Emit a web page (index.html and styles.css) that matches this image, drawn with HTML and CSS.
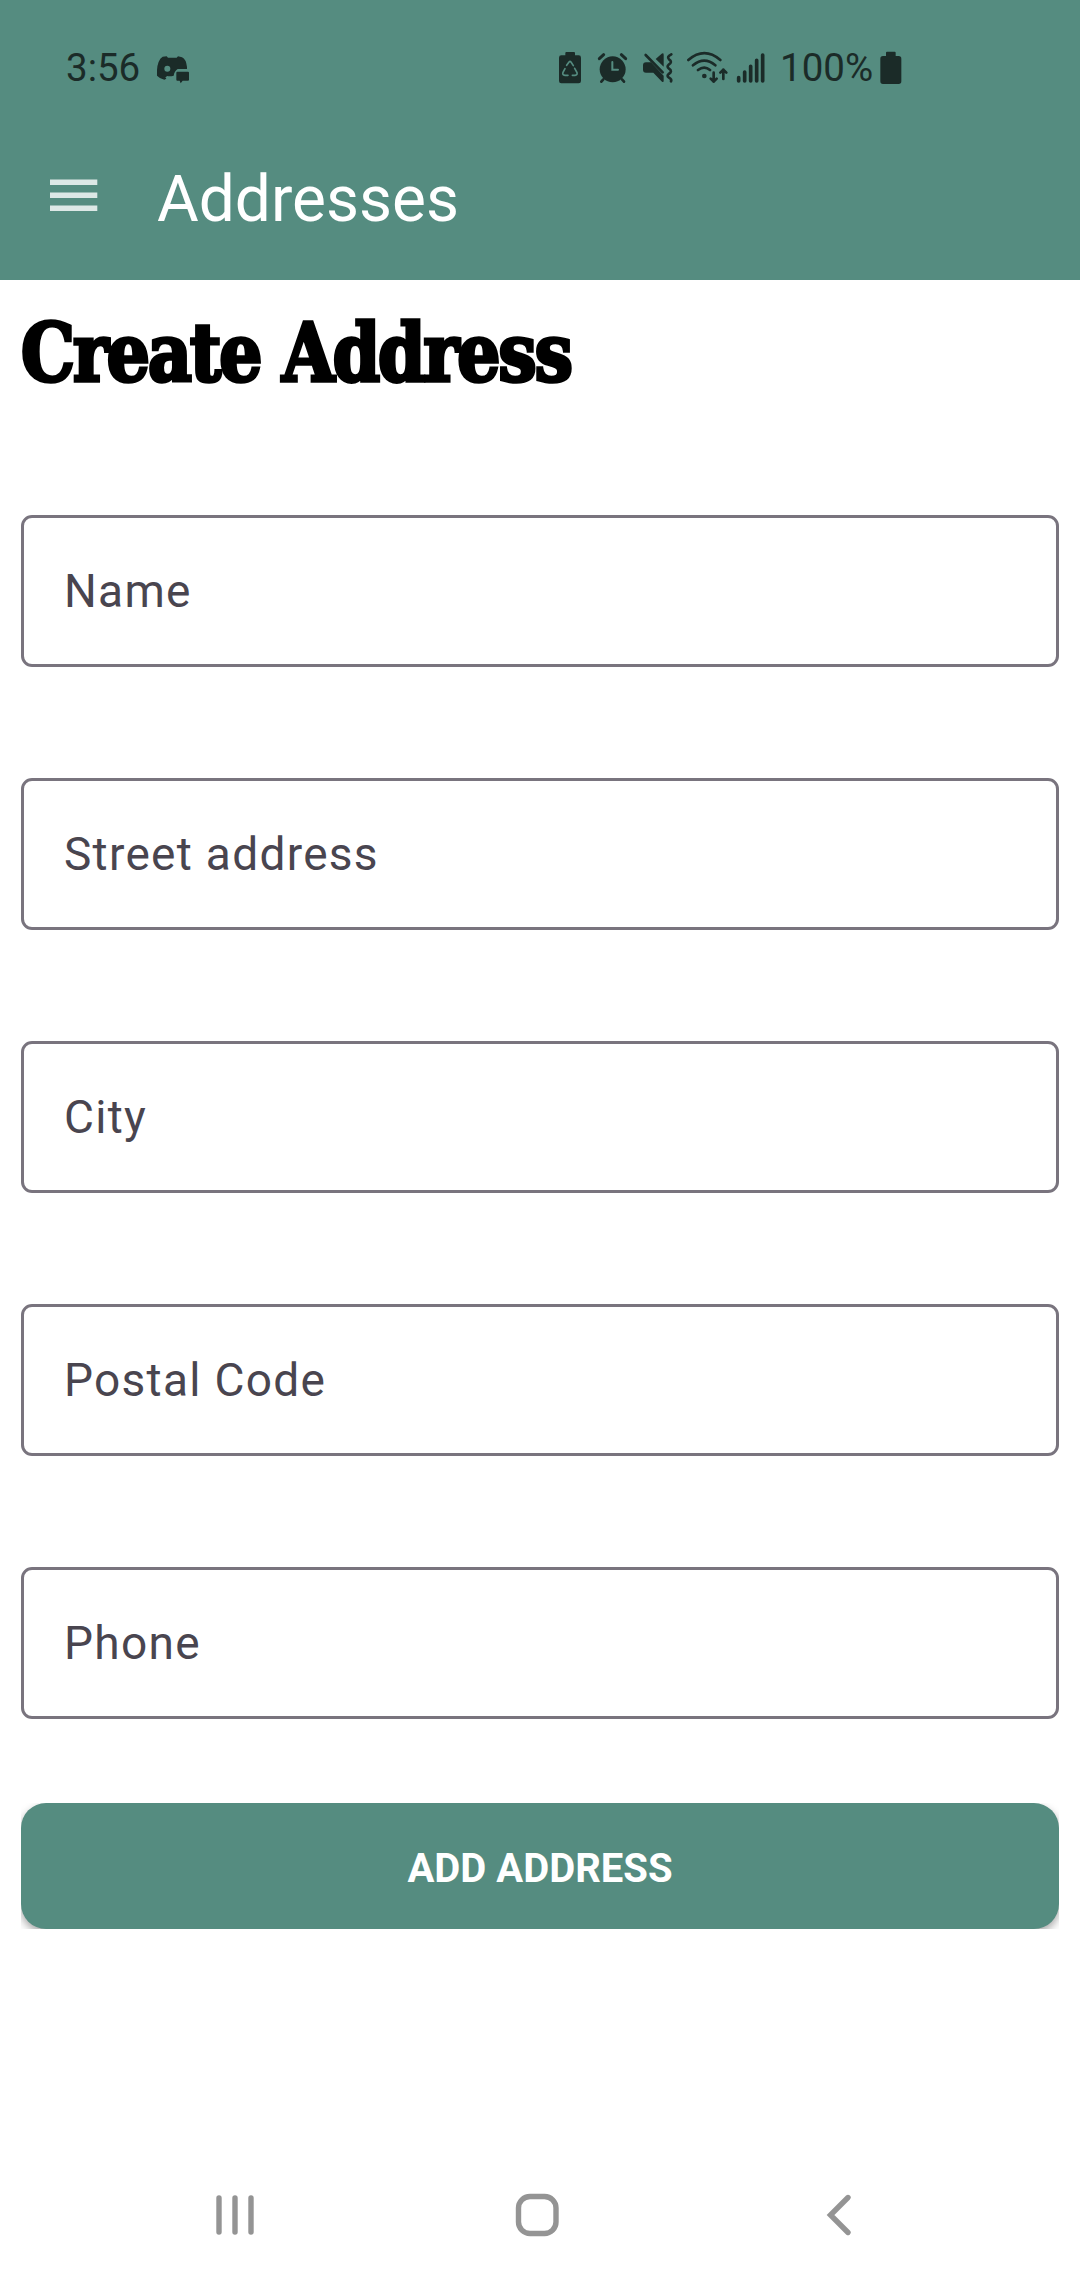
FILE: index.html
```html
<!DOCTYPE html>
<html lang="en">
<head>
<meta charset="utf-8">
<title>Addresses</title>
<link rel="stylesheet" href="styles.css">
</head>
<body>
<header class="header">
  <div class="status">
    <span class="clock">3:56</span>
    <svg class="chat" width="34" height="30" viewBox="348 76 102 90">
      <path d="M368 81 L380 80 L384 84 H410 L414 80 L426 83 Q438 88 441 112 V118 H413 Q403 124 401 138 Q390 141 382 139 L376 143 L379 147 L373 150 Q358 146 351 138 Q349 104 361 87Z"/>
      <circle class="hole" cx="382" cy="117" r="9"/>
      <path d="M412 126 H444 Q447 126 447 129 V150 Q447 153 444 153 H428 L422 161 L419 153 H412 Q409 153 409 150 V129 Q409 126 412 126Z"/>
    </svg>
    <div class="indicators">
      <svg width="24" height="34" viewBox="54 50 72 102">
        <path d="M79 53 H102 Q105 53 105 56 V63 H116 Q123 63 123 70 V140 Q123 147 116 147 H64 Q57 147 57 140 V70 Q57 63 64 63 H76 V56 Q76 53 79 53Z"/>
        <path class="cut" d="M80 93 L87 83 Q90 80 93 83 L100 94 M104 102 L111 115 Q113 122 105 123 H97 M84 123 H75 Q66 122 69 114 L75 103"/>
      </svg>
      <svg width="32" height="32" viewBox="171 52 96 96">
        <path class="line" d="M190 134 L184 141 M246 134 L252 141"/>
        <path class="line thick" d="M178 72 L191 60 M257 72 L244 60"/>
        <circle cx="218" cy="104" r="39"/>
        <path class="cut bold" d="M217 82 V105 H234"/>
      </svg>
      <svg width="32" height="32" viewBox="306 53 96 96">
        <path d="M318 84 H333 L371 124 V141 Q370 145 366 142 L340 115 H318 Q309 115 309 106 V93 Q309 84 318 84Z"/>
        <path d="M347 74 L365 58 Q371 55 371 61 V97Z"/>
        <path class="line" d="M317 62 L368 114"/>
        <path class="line" d="M394 60 Q379 68 387 75 Q399 83 386 91 Q379 97 387 103 Q399 111 386 119 Q379 125 387 130 Q396 135 393 141"/>
      </svg>
      <svg width="43" height="34" viewBox="437 48 129 102">
        <path class="line" d="M444 75 Q492 34 540 75 M458 91 Q492 63 525 91 M473 105 Q492 91 509 105"/>
        <circle cx="492" cy="123" r="7"/>
        <path class="line" d="M520 113 V140 M511 131 L520 140 L529 131 M549 132 V104 M540 113 L549 104 L558 113"/>
      </svg>
      <svg width="30" height="32" viewBox="169 49 90 96">
        <path class="line signal" d="M177 126 V136 M195 109 V136 M213 92 V136 M231 74 V136 M249 58 V136"/>
      </svg>
      <span class="percent">100%</span>
      <svg width="22" height="34" viewBox="599 46 66 102">
        <path d="M620 48 H643 Q646 48 646 51 V61 H655 Q663 61 663 69 V137 Q663 145 655 145 H608 Q600 145 600 137 V69 Q600 61 608 61 H617 V51 Q617 48 620 48Z"/>
      </svg>
    </div>
  </div>
  <div class="appbar">
    <svg class="menu" width="48" height="34" viewBox="0 0 48 34">
      <path d="M0 1.5H47.3V7H0Z M0 14.5H47.3V20H0Z M0 27.5H47.3V33H0Z"/>
    </svg>
    <span class="title">Addresses</span>
  </div>
</header>
<main class="content">
  <h1 class="heading">Create Address</h1>
  <form class="form">
    <div class="field">Name</div>
    <div class="field">Street address</div>
    <div class="field">City</div>
    <div class="field">Postal Code</div>
    <div class="field">Phone</div>
  </form>
  <div class="button-frame"><button class="button" type="button">ADD ADDRESS</button></div>
</main>
<nav class="navbar">
  <svg width="46" height="46" viewBox="212 2192 46 46"><path d="M219 2198V2232 M235 2198V2232 M251 2198V2232"/></svg>
  <svg width="46" height="46" viewBox="514 2192 46 46"><rect x="518.5" y="2196.5" width="37.5" height="37" rx="11.5"/></svg>
  <svg width="46" height="46" viewBox="816 2192 46 46"><path d="M848 2197.5L830.5 2215L848 2232.5"/></svg>
</nav>
</body>
</html>
```
FILE: styles.css
```css
* { box-sizing: border-box; }

body {
  margin: 0;
  width: 1080px;
  height: 2280px;
  display: flex;
  flex-direction: column;
  background: #fff;
  font-family: Roboto, "Liberation Sans", sans-serif;
}

svg { display: block; flex: none; }

.header { height: 280px; background: #558c80; color: #fff; }

.status {
  height: 136px;
  padding: 0 178px 0 66px;
  display: flex;
  align-items: center;
  color: #1b2b28;
  fill: #1b2b28;
  font-size: 38.5px;
  line-height: 1;
}

.clock { width: 90px; }
.chat { margin-top: 4px; }
.hole { fill: #558c80; }

.indicators { display: flex; align-items: center; margin-left: auto; }
.indicators svg:nth-child(1) { margin-right: 15px; }
.indicators svg:nth-child(2) { margin-right: 13px; }
.indicators svg:nth-child(3) { margin-right: 12px; }
.indicators svg:nth-child(4) { margin-right: 7px; }
.percent { width: 100px; margin-left: 14px; white-space: nowrap; }

.line {
  fill: none;
  stroke: #1b2b28;
  stroke-width: 8;
  stroke-linecap: round;
  stroke-linejoin: round;
}
.thick { stroke-width: 9; }
.signal { stroke-width: 11; }
.cut {
  fill: none;
  stroke: #558c80;
  stroke-width: 5;
  stroke-linecap: round;
}
.bold { stroke-width: 6; }

.appbar {
  height: 118px;
  padding-left: 50px;
  display: flex;
  align-items: center;
}
.menu { fill: #dde8e6; }
.title { margin-left: 59px; font-size: 64px; line-height: 76px; padding-top: 10px; }

.content { flex: 1; padding: 0 21px; }

.heading {
  margin: 0;
  height: 235px;
  padding-top: 20px;
  font-family: "DejaVu Serif Condensed", "DejaVu Serif", serif;
  font-size: 80px;
  font-weight: 700;
  line-height: 106px;
  letter-spacing: -2px;
  color: #000;
  white-space: nowrap;
  transform: scaleX(0.94);
  transform-origin: left;
  -webkit-text-stroke: 3.5px #000;
}

.form { display: flex; flex-direction: column; gap: 111px; }

.field {
  height: 152px;
  padding-left: 40px;
  border: 3px solid #79747e;
  border-radius: 11px;
  color: #49454f;
  font-size: 46px;
  line-height: 147px;
  letter-spacing: 1.3px;
}

.button-frame { margin-top: 84px; height: 126px; overflow: hidden; }

.button {
  display: block;
  width: 100%;
  height: 126px;
  padding: 4px 0 0;
  border: 0;
  border-radius: 25px;
  background: #558c80;
  box-shadow: 0 4px 8px rgba(0, 0, 0, 0.35);
  color: #fff;
  font: 700 40px Roboto, "Liberation Sans", sans-serif;
}

.navbar {
  height: 130px;
  padding: 0 218px 0 212px;
  display: flex;
  justify-content: space-between;
  align-items: center;
}
.navbar svg {
  fill: none;
  stroke: #949494;
  stroke-width: 5.4;
  stroke-linecap: round;
}
```
